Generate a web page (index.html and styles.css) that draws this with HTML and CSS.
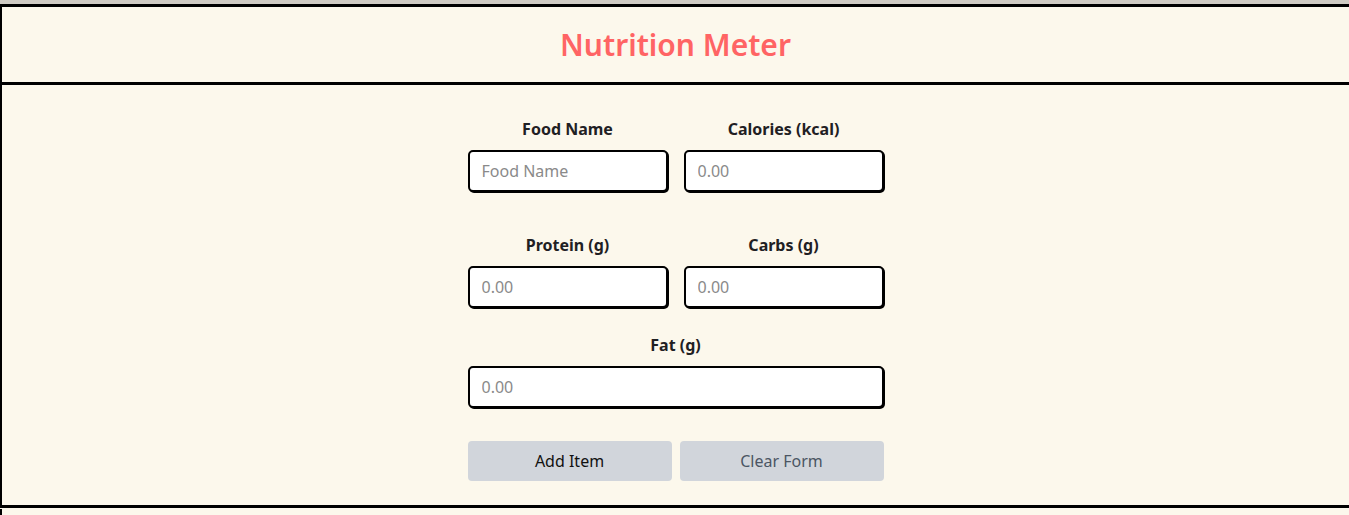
FILE: index.html
```html
<!DOCTYPE html>
<html lang="en">
<head>
<meta charset="utf-8">
<title>Nutrition Meter</title>
<link rel="stylesheet" href="styles.css">
</head>
<body>
<div class="topstrip"></div>
<header class="header">
  <h1 class="title">Nutrition Meter</h1>
</header>
<section class="panel">
  <form class="form">
    <div class="row two">
      <div class="field">
        <label class="label">Food Name</label>
        <input class="input" type="text" placeholder="Food Name">
      </div>
      <div class="field">
        <label class="label">Calories (kcal)</label>
        <input class="input" type="number" placeholder="0.00">
      </div>
    </div>
    <div class="row two second">
      <div class="field">
        <label class="label">Protein (g)</label>
        <input class="input" type="number" placeholder="0.00">
      </div>
      <div class="field">
        <label class="label">Carbs (g)</label>
        <input class="input" type="number" placeholder="0.00">
      </div>
    </div>
    <div class="row third">
      <div class="field">
        <label class="label">Fat (g)</label>
        <input class="input" type="number" placeholder="0.00">
      </div>
    </div>
    <div class="buttons">
      <button type="button" class="btn btn-add">Add Item</button>
      <button type="button" class="btn btn-clear">Clear Form</button>
    </div>
  </form>
</section>
<section class="next"></section>
</body>
</html>
```

FILE: styles.css
```css
* { box-sizing: border-box; }
html, body { margin: 0; padding: 0; }
body {
  background: #fcf8ec;
  font-family: "Noto Sans", "Open Sans", sans-serif;
  overflow: hidden;
  height: 515px;
}
.topstrip {
  height: 4px;
  background: #cfcbc3;
}
.header {
  border-top: 3px solid #000;
  border-left: 2px solid #000;
  border-bottom: 3px solid #000;
  height: 81px;
  display: flex;
  align-items: center;
  justify-content: center;
}
.title {
  margin: 0;
  color: #ff6464;
  font-size: 30px;
  font-weight: 600;
  line-height: 40px;
}
.panel {
  border-left: 2px solid #000;
  border-bottom: 3px solid #000;
  height: 423px;
  padding-top: 34px;
  display: flex;
  justify-content: center;
}
.form {
  width: 416px;
  display: flex;
  flex-direction: column;
}
.row.two {
  display: grid;
  grid-template-columns: 200px 200px;
  column-gap: 16px;
}
.row.second { margin-top: 43px; }
.row.third { margin-top: 27px; }
.field {
  display: flex;
  flex-direction: column;
  align-items: stretch;
}
.label {
  text-align: center;
  font-size: 16px;
  font-weight: 700;
  line-height: 20px;
  color: #1f2023;
  margin-bottom: 11px;
}
.input {
  height: 42px;
  border: 2px solid #000;
  border-radius: 5px;
  background: #fff;
  padding: 0 12px;
  font-family: "Noto Sans", "Open Sans", sans-serif;
  font-size: 16px;
  color: #111;
  box-shadow: 1px 1px 0 #000;
  outline: none;
}
.input::placeholder { color: #8a8a8a; }
.buttons {
  margin-top: 33px;
  display: flex;
  gap: 8px;
}
.btn {
  width: 204px;
  height: 40px;
  border: none;
  border-radius: 4px;
  background: #d1d5db;
  font-family: "Noto Sans", "Open Sans", sans-serif;
  font-size: 16px;
  cursor: pointer;
}
.btn-add { color: #111; }
.btn-clear { color: #4b5563; }
.next {
  margin-top: 1px;
  border-left: 2px solid #000;
  height: 20px;
}
```
